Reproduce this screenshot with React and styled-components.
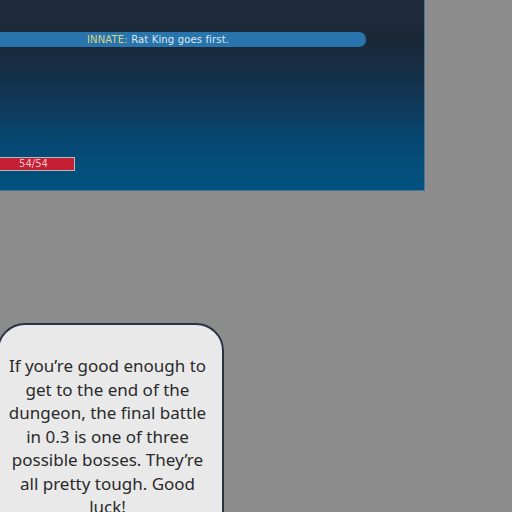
import React from "react";
import styled, { createGlobalStyle } from "styled-components";

const Global = createGlobalStyle`
  html, body {
    margin: 0;
    padding: 0;
    background: #8c8c8c;
  }
  body {
    width: 512px;
    height: 512px;
    overflow: hidden;
  }
`;

const Page = styled.div`
  width: 512px;
  height: 512px;
  overflow: hidden;
  display: flex;
  flex-direction: column;
`;

const Battle = styled.div`
  flex-shrink: 0;
  width: 425px;
  height: 191px;
  box-sizing: border-box;
  border-right: 1px solid #4a7596;
  border-bottom: 1px solid #4a7596;
  background: linear-gradient(#1d2b3c 0%, #1a2838 22%, #123553 50%, #064873 75%, #00527f 100%);
  display: flex;
  flex-direction: column;
  padding-top: 32px;
  font-family: "DejaVu Sans", sans-serif;
`;

const Banner = styled.div`
  width: 366px;
  height: 15px;
  border-radius: 0 7px 7px 0;
  background: #2874ad;
  color: #dde7f0;
  font-size: 10px;
  letter-spacing: 0.15px;
  line-height: 15px;
  padding-left: 87px;
  box-sizing: border-box;
  white-space: nowrap;
`;

const Tag = styled.span`
  color: #d8d27e;
`;

const HpBar = styled.div`
  margin-top: 110px;
  width: 75px;
  height: 14px;
  box-sizing: border-box;
  border: 1px solid #b9b9c0;
  border-left: none;
  background: #c32034;
  color: #f0c8cc;
  font-size: 10px;
  line-height: 12px;
  text-align: center;
  padding-right: 7px;
`;

const Bubble = styled.div`
  flex-shrink: 0;
  margin-top: 132px;
  margin-left: -3px;
  width: 227px;
  height: 240px;
  box-sizing: border-box;
  border: 2px solid #2b3142;
  border-radius: 28px;
  background: #e9e9e9;
  padding: 29px 8px 0 2px;
  font-family: "Noto Sans", sans-serif;
  font-size: 17px;
  line-height: 23.5px;
  color: #2a2a2a;
  text-align: center;
`;

export default function App() {
  return (
    <>
      <Global />
      <Page>
        <Battle>
          <Banner>
            <Tag>INNATE:</Tag> Rat King goes first.
          </Banner>
          <HpBar>54/54</HpBar>
        </Battle>
        <Bubble>
          If you’re good enough to get to the end of the dungeon, the final
          battle in 0.3 is one of three possible bosses. They’re all pretty
          tough. Good luck!
        </Bubble>
      </Page>
    </>
  );
}
